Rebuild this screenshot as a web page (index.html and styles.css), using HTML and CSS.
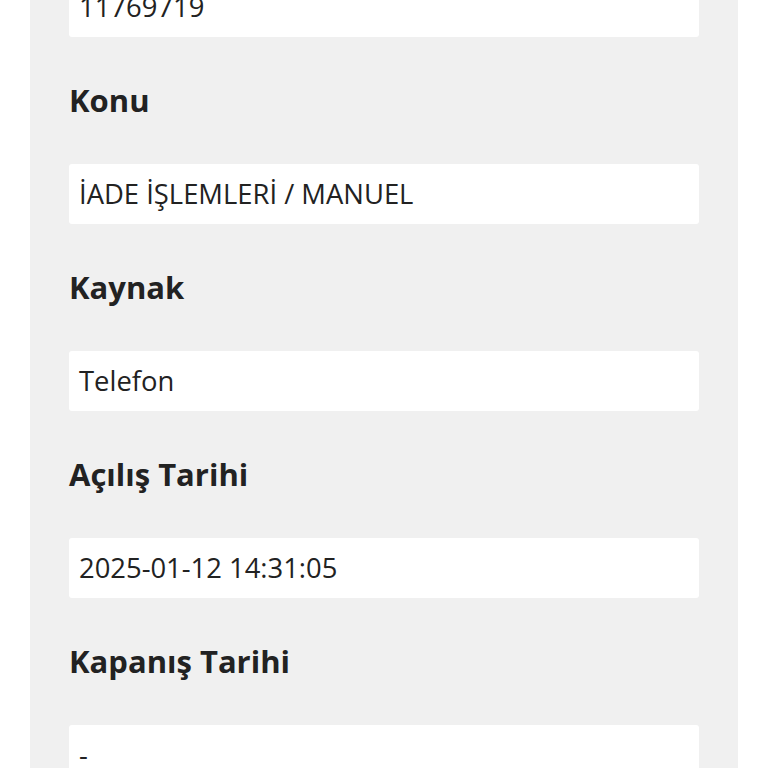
FILE: index.html
```html
<!DOCTYPE html>
<html lang="tr">
<head>
  <meta charset="UTF-8">
  <meta name="viewport" content="width=device-width, initial-scale=1.0">
  <title>Talep Detayı</title>
  <link rel="stylesheet" href="styles.css">
</head>
<body>
  <div class="panel">
    <div class="field-value first">11769719</div>

    <h3 class="field-label">Konu</h3>
    <div class="field-value">İADE İŞLEMLERİ / MANUEL</div>

    <h3 class="field-label">Kaynak</h3>
    <div class="field-value">Telefon</div>

    <h3 class="field-label">Açılış Tarihi</h3>
    <div class="field-value">2025-01-12 14:31:05</div>

    <h3 class="field-label">Kapanış Tarihi</h3>
    <div class="field-value">-</div>
  </div>
</body>
</html>
```

FILE: styles.css
```css
* {
  margin: 0;
  padding: 0;
  box-sizing: border-box;
}

body {
  font-family: 'Open Sans', 'Noto Sans', sans-serif;
  background: #fff;
  color: #222;
  height: 768px;
  overflow: hidden;
}

.panel {
  margin: 0 30px;
  padding: 0 39px 40px;
  background: #f0f0f0;
}

.field-label {
  font-size: 31px;
  line-height: 40px;
  font-weight: 700;
  color: #222;
  margin: 43px 0 44px;
}

.field-value {
  height: 60px;
  line-height: 59px;
  padding: 0 10px;
  background: #fff;
  border-radius: 3px;
  font-size: 27.4px;
  color: #222;
  white-space: nowrap;
}

.field-value.first {
  margin-top: -23px;
}
```
